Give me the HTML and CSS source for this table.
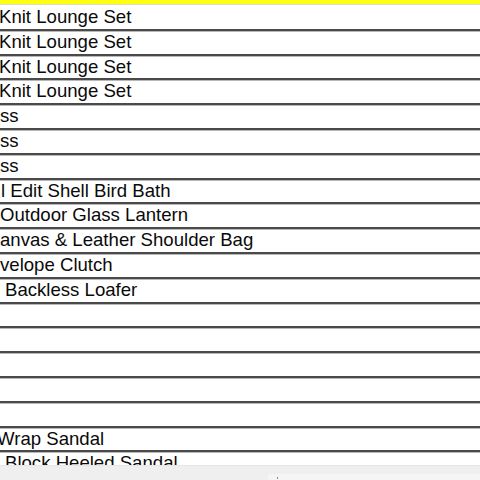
FILE: index.html
```html
<!DOCTYPE html>
<html lang="en">
<head>
<meta charset="utf-8">
<title>Sheet</title>
<link rel="stylesheet" href="styles.css">
</head>
<body>
<div class="page">
  <div class="topbar"></div>
  <div class="sheet">
    <div class="row"><span class="cell off-k">Knit Lounge Set</span></div>
    <div class="row"><span class="cell off-k">Knit Lounge Set</span></div>
    <div class="row"><span class="cell off-k">Knit Lounge Set</span></div>
    <div class="row"><span class="cell off-k">Knit Lounge Set</span></div>
    <div class="row"><span class="cell off-0">ss</span></div>
    <div class="row"><span class="cell off-0">ss</span></div>
    <div class="row"><span class="cell off-0">ss</span></div>
    <div class="row"><span class="cell off-l">l Edit Shell Bird Bath</span></div>
    <div class="row"><span class="cell off-0">Outdoor Glass Lantern</span></div>
    <div class="row"><span class="cell off-0">anvas &amp; Leather Shoulder Bag</span></div>
    <div class="row"><span class="cell off-0">velope Clutch</span></div>
    <div class="row"><span class="cell off-b">Backless Loafer</span></div>
    <div class="row"><span class="cell"></span></div>
    <div class="row"><span class="cell"></span></div>
    <div class="row"><span class="cell"></span></div>
    <div class="row"><span class="cell"></span></div>
    <div class="row"><span class="cell"></span></div>
    <div class="row"><span class="cell off-w">Wrap Sandal</span></div>
    <div class="row"><span class="cell off-b">Block Heeled Sandal</span></div>
  </div>
  <div class="hscroll">
    <div class="hscroll-track"><span class="hscroll-mark"></span></div>
  </div>
</div>
</body>
</html>
```
FILE: styles.css
```css
html, body {
  margin: 0;
  padding: 0;
  background: #ffffff;
}
body {
  width: 480px;
  height: 480px;
  overflow: hidden;
  font-family: "Liberation Sans", Arial, sans-serif;
  color: #000;
}
.page {
  display: flex;
  flex-direction: column;
  height: 480px;
}
.topbar {
  height: 4px;
  background: #ffff14;
  border-bottom: 1px solid #e2ddb0;
  flex: none;
}
.sheet {
  flex: none;
  height: 460px;
  overflow: hidden;
  padding-top: 1px;
  box-sizing: border-box;
}
.row {
  height: 24.8px;
  box-sizing: border-box;
  border-bottom: 2px solid #4a4a4a;
  box-shadow: 0 1px 0 #b8b8b8;
  display: flex;
  align-items: center;
  overflow: hidden;
  flex: none;
}
.cell {
  font-size: 18.6px;
  line-height: 22.8px;
  white-space: nowrap;
  color: #0a0a0a;
}
.off-k { margin-left: -1px; }
.off-0 { margin-left: 0; }
.off-l { margin-left: 1px; }
.off-b { margin-left: 5px; }
.off-w { margin-left: -3px; }
.hscroll {
  flex: none;
  height: 15px;
  background: #efefef;
  border-top: 1px solid #e6e6e6;
  box-sizing: border-box;
  display: flex;
  justify-content: flex-end;
  align-items: flex-end;
}
.hscroll-track {
  width: 212px;
  height: 6px;
  background: #f5f5f5;
  position: relative;
}
.hscroll-mark {
  position: absolute;
  left: 9px;
  top: 3px;
  width: 1px;
  height: 2px;
  background: #8a8a8a;
}
```
